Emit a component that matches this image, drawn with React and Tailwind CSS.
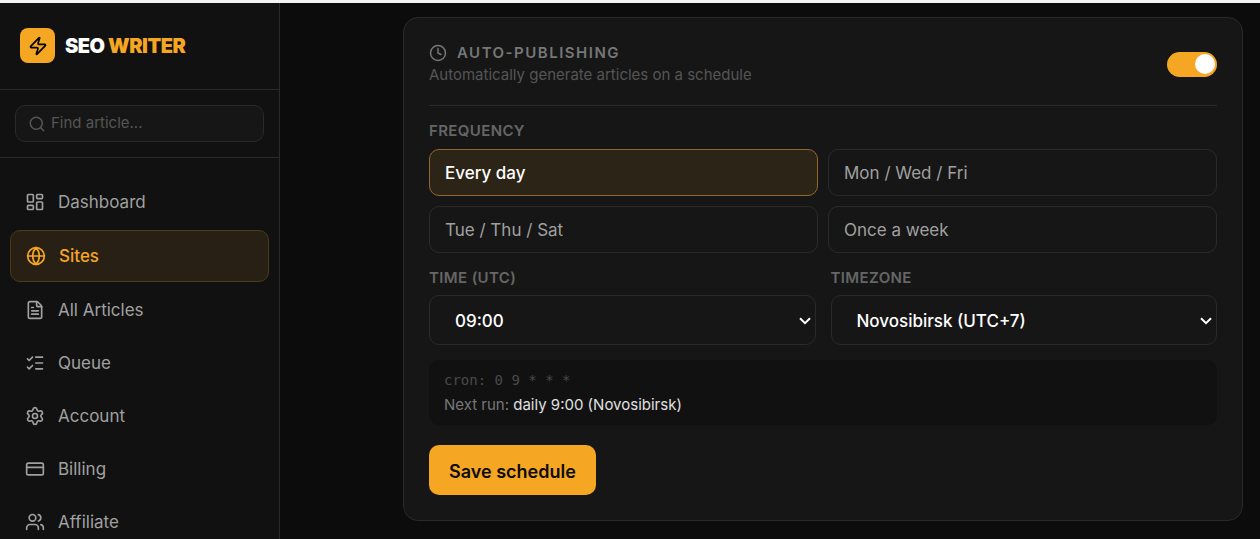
import { useState } from "react";
import {
  Clock,
  CreditCard,
  FileText,
  Globe,
  LayoutDashboard,
  ListChecks,
  Search,
  Settings,
  Users,
  Zap,
} from "lucide-react";

const navItems = [
  { label: "Dashboard", icon: LayoutDashboard },
  { label: "Sites", icon: Globe, active: true },
  { label: "All Articles", icon: FileText },
  { label: "Queue", icon: ListChecks },
  { label: "Account", icon: Settings },
  { label: "Billing", icon: CreditCard },
  { label: "Affiliate", icon: Users },
];

const frequencies = [
  "Every day",
  "Mon / Wed / Fri",
  "Tue / Thu / Sat",
  "Once a week",
];

const Sidebar = () => (
  <aside className="w-[280px] shrink-0 overflow-hidden border-r border-[#2a2a2a] bg-[#111111]">
    <div className="flex items-center gap-[10px] border-b border-[#2a2a2a] px-5 pt-[25px] pb-[26px]">
      <div className="flex size-[35px] items-center justify-center rounded-lg bg-[#f5a623] text-black">
        <Zap size={20} />
      </div>
      <span className="text-[20px] font-black tracking-tight text-white">
        SEO <span className="text-[#f5a623]">WRITER</span>
      </span>
    </div>

    <div className="border-b border-[#2a2a2a] p-[15px]">
      <label className="flex h-[37px] items-center gap-[5px] rounded-[10px] border border-[#2a2a2a] bg-[#161616] px-3 text-[#555555]">
        <Search size={18} className="shrink-0" />
        <input
          type="text"
          aria-label="Find article"
          placeholder="Find article..."
          className="w-full min-w-0 bg-transparent pb-[2px] text-[15px] leading-5 text-white outline-none placeholder:text-[#555555]"
        />
      </label>
    </div>

    <nav className="flex flex-col gap-[3px] px-[10px] pt-[19px]">
      {navItems.map(({ label, icon: Icon, active }) => (
        <a
          key={label}
          href="#"
          className={
            active
              ? "flex items-center gap-[13px] rounded-[10px] border border-[#4b3918] bg-[#282014] px-[15px] py-[13px] text-[17px] leading-6 font-medium text-[#f5a623]"
              : "flex items-center gap-[13px] rounded-[10px] px-[15px] py-[13px] text-[17px] leading-6 text-[#a0a0a0]"
          }
        >
          <Icon size={20} strokeWidth={2} />
          {label}
        </a>
      ))}
    </nav>
  </aside>
);

const SelectField = ({ id, label, options }) => (
  <div>
    <label
      htmlFor={id}
      className="mb-2 block text-[15px] leading-[19px] font-semibold tracking-wide text-[#666666]"
    >
      {label}
    </label>
    <div className="relative">
      <select
        id={id}
        className="h-[50px] w-full appearance-none rounded-[10px] border border-[#2a2a2a] bg-[#161616] px-[25px] pt-[3px] text-[17px] font-medium text-white outline-none"
      >
        {options.map((option) => (
          <option key={option}>{option}</option>
        ))}
      </select>
      <svg
        viewBox="0 0 12 8"
        className="pointer-events-none absolute top-[22px] right-[5px] h-2 w-3 text-white"
        fill="none"
        stroke="currentColor"
        strokeWidth="2"
        aria-hidden="true"
      >
        <path d="M1 1.2 6 6.2 11 1.2" />
      </svg>
    </div>
  </div>
);

const AutoPublishing = () => {
  const [enabled, setEnabled] = useState(true);
  const [frequency, setFrequency] = useState("Every day");

  return (
    <section className="mt-[14px] mr-[17px] ml-auto w-full max-w-[840px] rounded-[15px] border border-[#2a2a2a] bg-[#161616] p-[25px]">
      <div className="flex items-center justify-between border-b border-[#2a2a2a] pb-5">
        <div>
          <h2 className="flex items-center gap-[10px] text-[15px] leading-5 font-semibold tracking-widest text-[#777777]">
            <Clock size={18} />
            AUTO-PUBLISHING
          </h2>
          <p className="pt-[2px] text-[15px] leading-5 text-[#555555]">
            Automatically generate articles on a schedule
          </p>
        </div>
        <input
          type="checkbox"
          role="switch"
          aria-label="Auto-publishing"
          checked={enabled}
          onChange={() => setEnabled(!enabled)}
          className="h-[25px] w-[50px] appearance-none rounded-full bg-[#333333] p-[2px] before:block before:size-5 before:rounded-full before:bg-white checked:bg-[#f5a623] checked:before:ml-auto"
        />
      </div>

      {/* Frequency */}
      <h3 className="mt-[15px] mb-[9px] text-[15px] leading-[19px] font-semibold tracking-wide text-[#666666]">
        FREQUENCY
      </h3>
      <div className="grid grid-cols-2 gap-[10px]">
        {frequencies.map((item) => (
          <button
            key={item}
            type="button"
            onClick={() => setFrequency(item)}
            className={
              item === frequency
                ? "h-[47px] rounded-[10px] border border-[#93682a] bg-[#2d2418] px-[15px] pt-[2px] text-left text-[17px] font-medium text-white"
                : "h-[47px] rounded-[10px] border border-[#2a2a2a] px-[15px] pt-[2px] text-left text-[17px] text-[#a0a0a0]"
            }
          >
            {item}
          </button>
        ))}
      </div>

      {/* Time */}
      <div className="mt-[15px] grid grid-cols-2 gap-[15px]">
        <SelectField
          id="time"
          label="TIME (UTC)"
          options={["09:00", "12:00", "18:00"]}
        />
        <SelectField
          id="timezone"
          label="TIMEZONE"
          options={["Novosibirsk (UTC+7)", "Moscow (UTC+3)", "UTC"]}
        />
      </div>

      <div className="mt-[15px] rounded-[10px] bg-[#111111] px-[15px] pt-[10px] pb-2 text-[15px] text-[#777777]">
        <p className="font-['DejaVu_Sans_Mono',monospace] text-[14px] leading-5 text-[#4a4a4a]">
          cron: 0 9 * * *
        </p>
        <p className="pt-[3px] leading-6">
          Next run: <span className="text-[#e0e0e0]">daily 9:00 (Novosibirsk)</span>
        </p>
      </div>

      <button
        type="button"
        className="mt-5 block h-[50px] rounded-[10px] bg-[#f5a623] px-5 pt-[2px] text-[18px] font-semibold text-[#0c0c0c]"
      >
        Save schedule
      </button>
    </section>
  );
};

export default function App() {
  return (
    <div className="flex h-screen overflow-hidden border-t-3 border-[#f4f4f4] bg-[#0c0c0c] font-[Inter,sans-serif]">
      <Sidebar />
      <main className="min-w-0 flex-1">
        <AutoPublishing />
      </main>
    </div>
  );
}
